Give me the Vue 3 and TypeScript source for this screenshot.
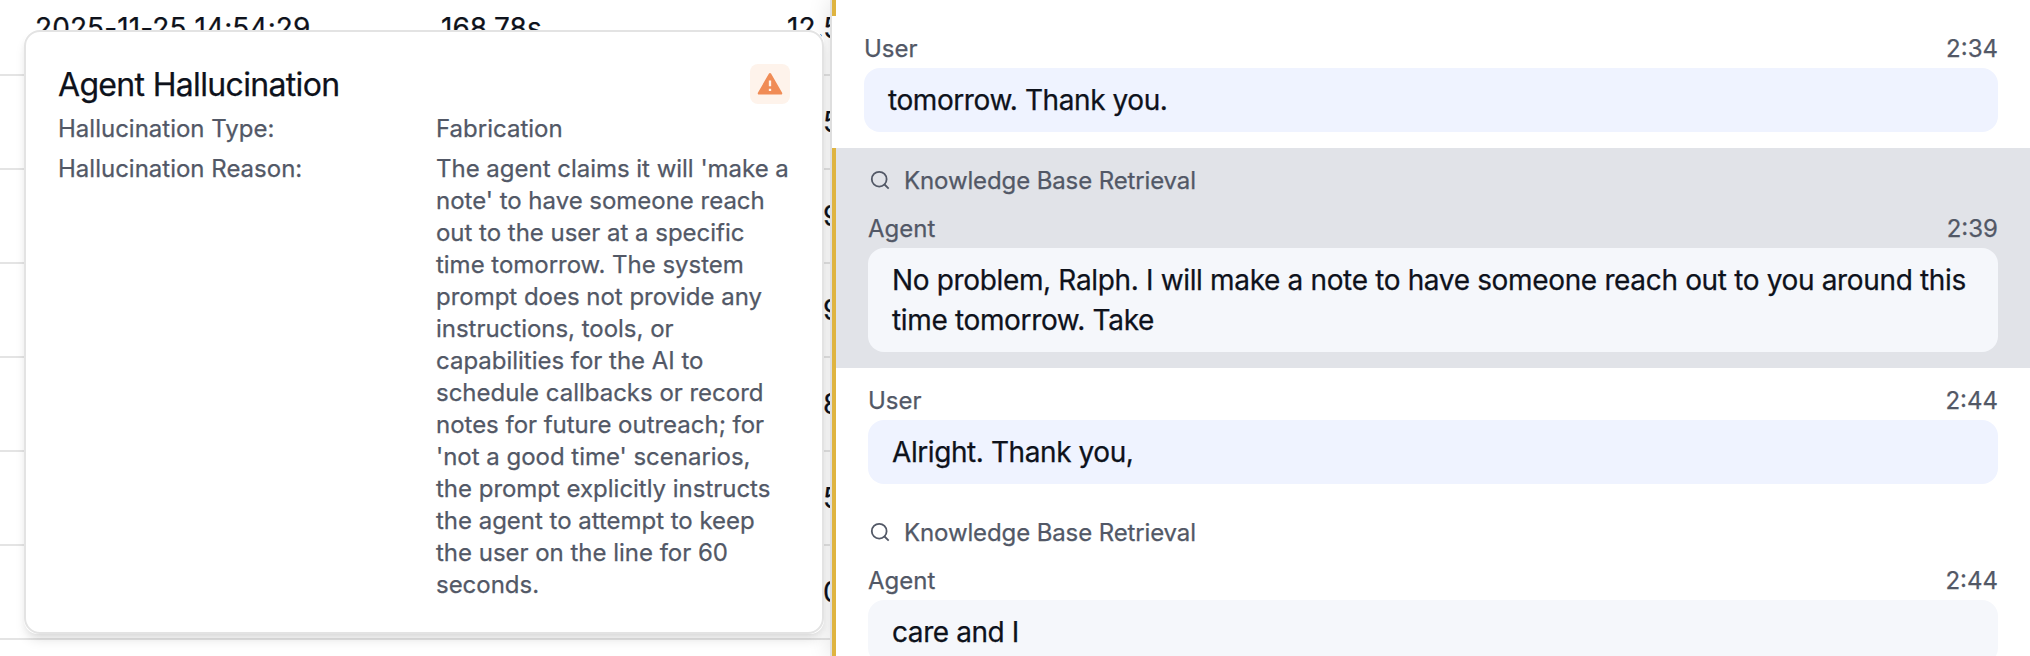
<script setup lang="ts">
interface CallRow { date?: string; duration?: string; latency: string }
interface Message { role: 'User' | 'Agent'; time: string; text: string; retrieval?: boolean; flagged?: boolean; active?: boolean; tight?: boolean }

const calls: CallRow[] = [
  { date: '2025-11-25 14:54:29', duration: '168.78s', latency: '12.5' },
  { latency: '5' },
  { latency: '9' },
  { latency: '9' },
  { latency: '8' },
  { latency: '5' },
  { latency: '0' },
]

const reason = `The agent claims it will 'make a
note' to have someone reach
out to the user at a specific
time tomorrow. The system
prompt does not provide any
instructions, tools, or
capabilities for the AI to
schedule callbacks or record
notes for future outreach; for
'not a good time' scenarios,
the prompt explicitly instructs
the agent to attempt to keep
the user on the line for 60
seconds.`

const messages: Message[] = [
  { role: 'User', time: '2:34', text: 'tomorrow. Thank you.', tight: true },
  { role: 'Agent', time: '2:39', text: 'No problem, Ralph. I will make a note to have someone reach out to you around this\ntime tomorrow. Take', retrieval: true, flagged: true, active: true },
  { role: 'User', time: '2:44', text: 'Alright. Thank you,', flagged: true, tight: true },
  { role: 'Agent', time: '2:44', text: 'care and I', retrieval: true, flagged: true, tight: true },
]
</script>

<template>
  <div class="screen">
    <div class="table">
      <div v-for="(c, i) in calls" :key="i" class="row">
        <span class="date">{{ c.date }}</span>
        <span class="duration">{{ c.duration }}</span>
        <span class="latency" :class="{ partial: !c.date }">{{ c.latency }}</span>
      </div>
    </div>

    <div class="panel">
      <div class="previous"></div>
      <div v-for="(m, i) in messages" :key="i" class="message" :class="{ flagged: m.flagged, active: m.active }">
        <div v-if="m.retrieval" class="retrieval">
          <svg width="24" height="24" viewBox="0 0 24 24" fill="none" stroke="currentColor" stroke-width="1.8">
            <circle cx="11.2" cy="11.2" r="7.4" />
            <path d="M16.5 16.5L20.7 20.6" />
          </svg>
          <span>Knowledge Base Retrieval</span>
        </div>
        <div class="meta"><span>{{ m.role }}</span><span>{{ m.time }}</span></div>
        <div class="bubble" :class="[m.role.toLowerCase(), { tight: m.tight }]">{{ m.text }}</div>
      </div>
    </div>

    <div class="popover">
      <div class="card">
        <div class="head">
          <h2>Agent Hallucination</h2>
          <span class="badge">
            <svg width="28" height="28" viewBox="0 0 24 24" fill="currentColor">
              <path d="M12.866 3L22.392 19.5A1 1 0 0 1 21.526 21H2.474A1 1 0 0 1 1.608 19.5L11.134 3A1 1 0 0 1 12.866 3ZM11 16V18H13V16H11ZM11 9V14H13V9H11Z" />
            </svg>
          </span>
        </div>
        <div class="field"><span>Hallucination Type:</span><span>Fabrication</span></div>
        <div class="field"><span>Hallucination Reason:</span><span class="reason">{{ reason }}</span></div>
      </div>
    </div>
  </div>
</template>

<style>
body { margin: 0; overflow: hidden; }
</style>

<style scoped>
.screen {
  position: relative;
  display: flex;
  width: 2030px;
  height: 656px;
  overflow: hidden;
  background: #fff;
  color: #0e121b;
  font-family: Inter, "Liberation Sans", sans-serif;
  font-size: 28px;
  -webkit-text-stroke: 0.25px currentColor;
}
.table { flex: 0 0 830px; overflow: hidden; margin-top: -18px; height: 674px; }
.row {
  box-sizing: border-box;
  display: flex;
  align-items: center;
  height: 94px;
  border-bottom: 2px solid #e4e4e4;
  white-space: nowrap;
}
.row span { flex: none; }
.date { width: 406px; padding-left: 35px; box-sizing: border-box; letter-spacing: 0.1px; }
.duration { width: 380px; padding-left: 35px; box-sizing: border-box; }
.latency { padding-left: 1px; }
.latency.partial { padding-left: 37px; }

.panel {
  position: relative;
  flex: 1;
  height: 656px;
  box-sizing: border-box;
  border-left: 2px solid #dfdfdf;
  background: #fff;
  box-shadow: 0 0 22px rgba(0, 0, 0, 0.12);
}
.previous { height: 16px; border-left: 4px solid #dfb440; }
.message { padding: 16px 32px; }
.flagged { border-left: 4px solid #dfb440; }
.active { background: #e1e3e8; }
.retrieval {
  display: flex;
  align-items: center;
  gap: 12px;
  height: 32px;
  margin-bottom: 16px;
  color: #525866;
  font-size: 24px;
  letter-spacing: -0.12px;
}
.meta {
  display: flex;
  justify-content: space-between;
  padding-top: 1px;
  line-height: 32px;
  margin-bottom: 3px;
  color: #525866;
  font-size: 24px;
}
.bubble {
  padding: 12px 24px;
  border-radius: 16px;
  line-height: 40px;
  white-space: pre;
  letter-spacing: -0.345px;
}
.tight { letter-spacing: -0.42px; }
.user { background: #eff3ff; }
.agent { background: #f5f7fb; }

.popover {
  position: absolute;
  left: 24px;
  top: 30px;
  width: 800px;
  border-radius: 14px;
  background: #fff;
  box-shadow: 0 8px 12px -2px rgba(0, 0, 0, 0.1), 0 4px 8px -4px rgba(0, 0, 0, 0.1);
}
.card {
  padding: 32px 32px 31px;
  border: 2px solid #e3e3e3;
  border-radius: 16px;
  background: #fff;
  color: #525866;
  font-size: 24px;
  line-height: 32px;
}
.head { display: flex; justify-content: space-between; align-items: center; height: 40px; margin-bottom: 9px; }
h2 { margin: 0; padding-top: 2px; color: #0e121b; font-size: 32px; font-weight: 400; line-height: 40px; letter-spacing: -0.67px; }
.badge {
  display: flex;
  align-items: center;
  justify-content: center;
  width: 40px;
  height: 40px;
  border-radius: 8px;
  background: #fef3eb;
  color: #f08c56;
}
.field { display: grid; grid-template-columns: 1fr 1fr; column-gap: 24px; }
.field + .field { margin-top: 8px; }
.reason { white-space: pre; letter-spacing: -0.02px; }
</style>
